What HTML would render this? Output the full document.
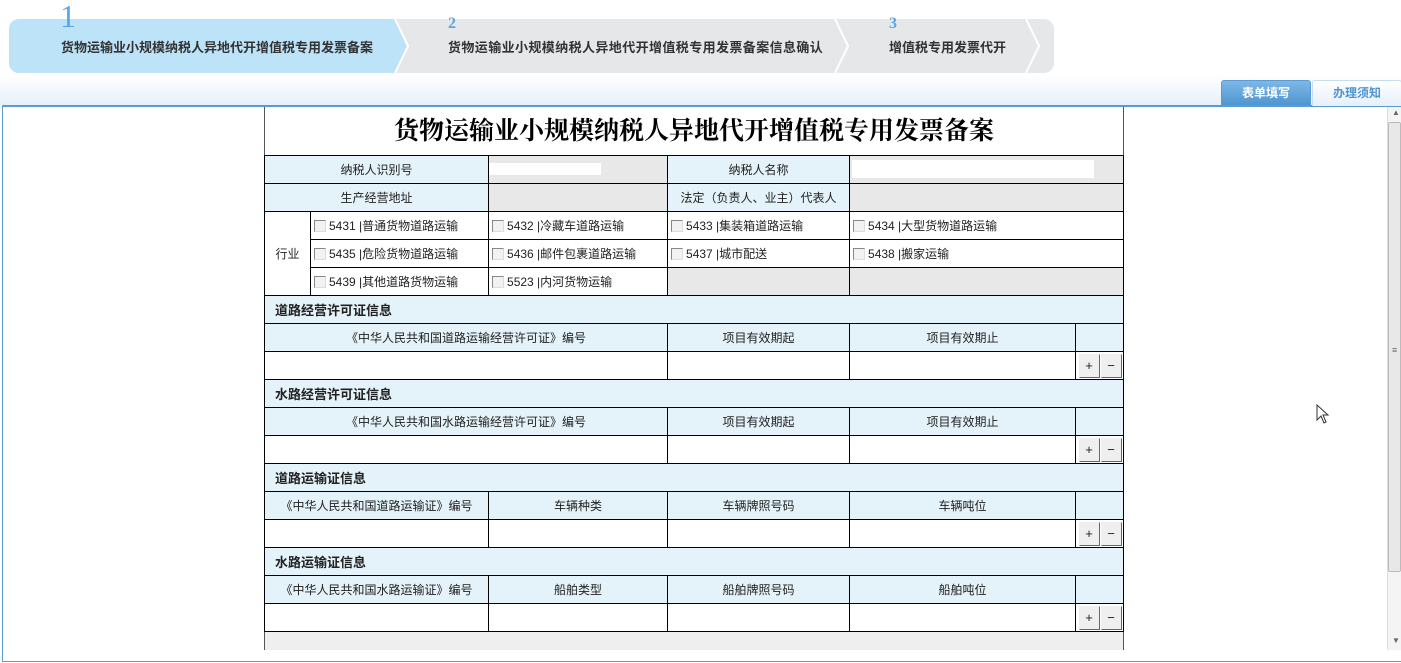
<!DOCTYPE html>
<html><head><meta charset="utf-8">
<style>
*{margin:0;padding:0;box-sizing:border-box}
body{width:1401px;height:663px;position:relative;background:#fff;font-family:"Liberation Sans","Noto Sans CJK SC",sans-serif;font-size:12px;color:#222;overflow:hidden}
.abs{position:absolute}
.lbl{font-size:13px;font-weight:bold;color:#333;white-space:nowrap}
.num{color:#5aa5e6;font-family:"Liberation Serif",serif}
.band{left:0;top:75px;width:1401px;height:30px;background:linear-gradient(#fff,#e6f0fa)}
.frame{left:2px;top:105px;width:1399px;height:557px;border-top:2px solid #5a9bd5;border-left:1px solid #5a9bd5;border-bottom:1px solid #5a9bd5;background:#fff}
table{position:absolute;left:264px;top:155px;width:859px;border-collapse:collapse;table-layout:fixed}
td{border:1px solid #000;height:28px;padding:0;text-align:center;font-size:12px;white-space:nowrap;overflow:hidden}
.h{background:#e4f2f9}
.g{background:#e8e8e8}
.w{background:#fff}
.sec{background:#e4f2f9;text-align:left;padding-left:10px;font-weight:bold;font-size:13px}
.ck{text-align:left;padding-left:3px}
.cb{display:inline-block;width:12px;height:12px;border:1px solid #888;border-right-color:#ddd;border-bottom-color:#ddd;background:#f2f2f2;vertical-align:-2px;margin-right:3px}
.btn{display:inline-block;width:21px;height:24px;border:1px solid #666;border-top-color:#eee;border-left-color:#eee;background:#efefef;line-height:22px;font-size:13px;margin-left:1px;vertical-align:middle}
</style></head><body>
<svg class="abs" style="left:0;top:0" width="1070" height="80">
<path d="M19 19 H1044 a10 10 0 0 1 10 10 V63 a10 10 0 0 1 -10 10 H19 a10 10 0 0 1 -10 -10 V29 a10 10 0 0 1 10 -10Z" fill="#e6e7e9"/>
<path d="M19 19 H395 L408 46 L395 73 H19 a10 10 0 0 1 -10 -10 V29 a10 10 0 0 1 10 -10Z" fill="#bde3f8"/>
<path d="M395 19 L408 46 L395 73" stroke="#fff" stroke-width="2" fill="none"/>
<path d="M835 19 L848 46 L835 73" stroke="#fff" stroke-width="2" fill="none"/>
<path d="M1026 19 L1039 46 L1026 73" stroke="#fff" stroke-width="2" fill="none"/>
</svg>
<div class="abs num" style="left:60px;top:-2px;font-size:32px;font-weight:normal">1</div>
<div class="abs lbl" style="left:61px;top:37px">货物运输业小规模纳税人异地代开增值税专用发票备案</div>
<div class="abs num" style="left:448px;top:15px;font-size:16px;font-weight:bold">2</div>
<div class="abs lbl" style="left:448px;top:37px;letter-spacing:0.4px">货物运输业小规模纳税人异地代开增值税专用发票备案信息确认</div>
<div class="abs num" style="left:889px;top:15px;font-size:16px;font-weight:bold">3</div>
<div class="abs lbl" style="left:889px;top:37px">增值税专用发票代开</div>
<div class="abs band"></div>
<div class="abs frame"></div>
<div class="abs" style="left:1221px;top:80px;width:90px;height:26px;background:linear-gradient(#7db8e6,#4f95d2);border:1px solid #5a9bd5;border-radius:3px 3px 0 0;color:#fff;font-weight:bold;text-align:center;line-height:24px">表单填写</div>
<div class="abs" style="left:1312px;top:80px;width:90px;height:26px;background:linear-gradient(#fff,#e6f0fa);border:1px solid #c6dcef;border-bottom:none;border-radius:3px 3px 0 0;color:#4f95d2;font-weight:bold;text-align:center;line-height:24px">办理须知</div>
<div class="abs" style="left:264px;top:107px;width:860px;height:543px;border-left:1px solid #555;border-right:1px solid #555;background:#fff"></div>
<div class="abs" style="left:265px;top:631px;width:858px;height:19px;background:#efefef"></div>
<div class="abs" style="left:265px;top:111px;width:858px;text-align:center;font-family:'Noto Serif CJK SC','Liberation Serif',serif;font-size:25px;font-weight:bold;color:#000">货物运输业小规模纳税人异地代开增值税专用发票备案</div>
<table>
<colgroup><col style="width:46px"><col style="width:178px"><col style="width:179px"><col style="width:182px"><col style="width:226px"><col style="width:48px"></colgroup>
<tr><td class="h" colspan="2">纳税人识别号</td><td class="g"><div style="width:112px;height:12px;background:#fff;margin:-2px 0 0 0"></div></td><td class="h">纳税人名称</td><td class="g" colspan="2"><div style="width:242px;height:18px;background:#fff;margin:-2px 0 0 2px"></div></td></tr>
<tr><td class="h" colspan="2">生产经营地址</td><td class="g"></td><td class="h">法定（负责人、业主）代表人</td><td class="g" colspan="2"></td></tr>
<tr><td class="w" rowspan="3">行业</td><td class="ck"><span class="cb"></span>5431 |普通货物道路运输</td><td class="ck"><span class="cb"></span>5432 |冷藏车道路运输</td><td class="ck"><span class="cb"></span>5433 |集装箱道路运输</td><td class="ck" colspan="2"><span class="cb"></span>5434 |大型货物道路运输</td></tr>
<tr><td class="ck"><span class="cb"></span>5435 |危险货物道路运输</td><td class="ck"><span class="cb"></span>5436 |邮件包裹道路运输</td><td class="ck"><span class="cb"></span>5437 |城市配送</td><td class="ck" colspan="2"><span class="cb"></span>5438 |搬家运输</td></tr>
<tr><td class="ck"><span class="cb"></span>5439 |其他道路货物运输</td><td class="ck"><span class="cb"></span>5523 |内河货物运输</td><td class="g"></td><td class="g" colspan="2"></td></tr>
<tr><td class="sec" colspan="6">道路经营许可证信息</td></tr>
<tr><td class="h" colspan="3">《中华人民共和国道路运输经营许可证》编号</td><td class="h">项目有效期起</td><td class="h">项目有效期止</td><td class="h"></td></tr>
<tr><td colspan="3"></td><td></td><td></td><td><span class="btn">+</span><span class="btn">−</span></td></tr>
<tr><td class="sec" colspan="6">水路经营许可证信息</td></tr>
<tr><td class="h" colspan="3">《中华人民共和国水路运输经营许可证》编号</td><td class="h">项目有效期起</td><td class="h">项目有效期止</td><td class="h"></td></tr>
<tr><td colspan="3"></td><td></td><td></td><td><span class="btn">+</span><span class="btn">−</span></td></tr>
<tr><td class="sec" colspan="6">道路运输证信息</td></tr>
<tr><td class="h" colspan="2">《中华人民共和国道路运输证》编号</td><td class="h">车辆种类</td><td class="h">车辆牌照号码</td><td class="h">车辆吨位</td><td class="h"></td></tr>
<tr><td colspan="2"></td><td></td><td></td><td></td><td><span class="btn">+</span><span class="btn">−</span></td></tr>
<tr><td class="sec" colspan="6">水路运输证信息</td></tr>
<tr><td class="h" colspan="2">《中华人民共和国水路运输证》编号</td><td class="h">船舶类型</td><td class="h">船舶牌照号码</td><td class="h">船舶吨位</td><td class="h"></td></tr>
<tr><td colspan="2"></td><td></td><td></td><td></td><td><span class="btn">+</span><span class="btn">−</span></td></tr>
</table>
<div class="abs" style="left:1387px;top:107px;width:14px;height:543px;background:#f4f4f4;border-left:1px solid #ddd"></div>
<div class="abs" style="left:1388px;top:122px;width:13px;height:450px;background:#e8e8e8;border:1px solid #bbb;border-radius:2px"></div>
<div class="abs" style="left:1392px;top:345px;font-size:9px;color:#666">≡</div>
<div class="abs" style="left:1392px;top:108px;font-size:8px;color:#666">▲</div>
<div class="abs" style="left:1392px;top:636px;font-size:8px;color:#666">▼</div>
<svg class="abs" style="left:1316px;top:404px" width="14" height="22"><path d="M1 1 V16 L5 12 L8 19 L10 18 L7 11 L12 11 Z" fill="#fff" stroke="#333" stroke-width="1"/></svg>
</body></html>
